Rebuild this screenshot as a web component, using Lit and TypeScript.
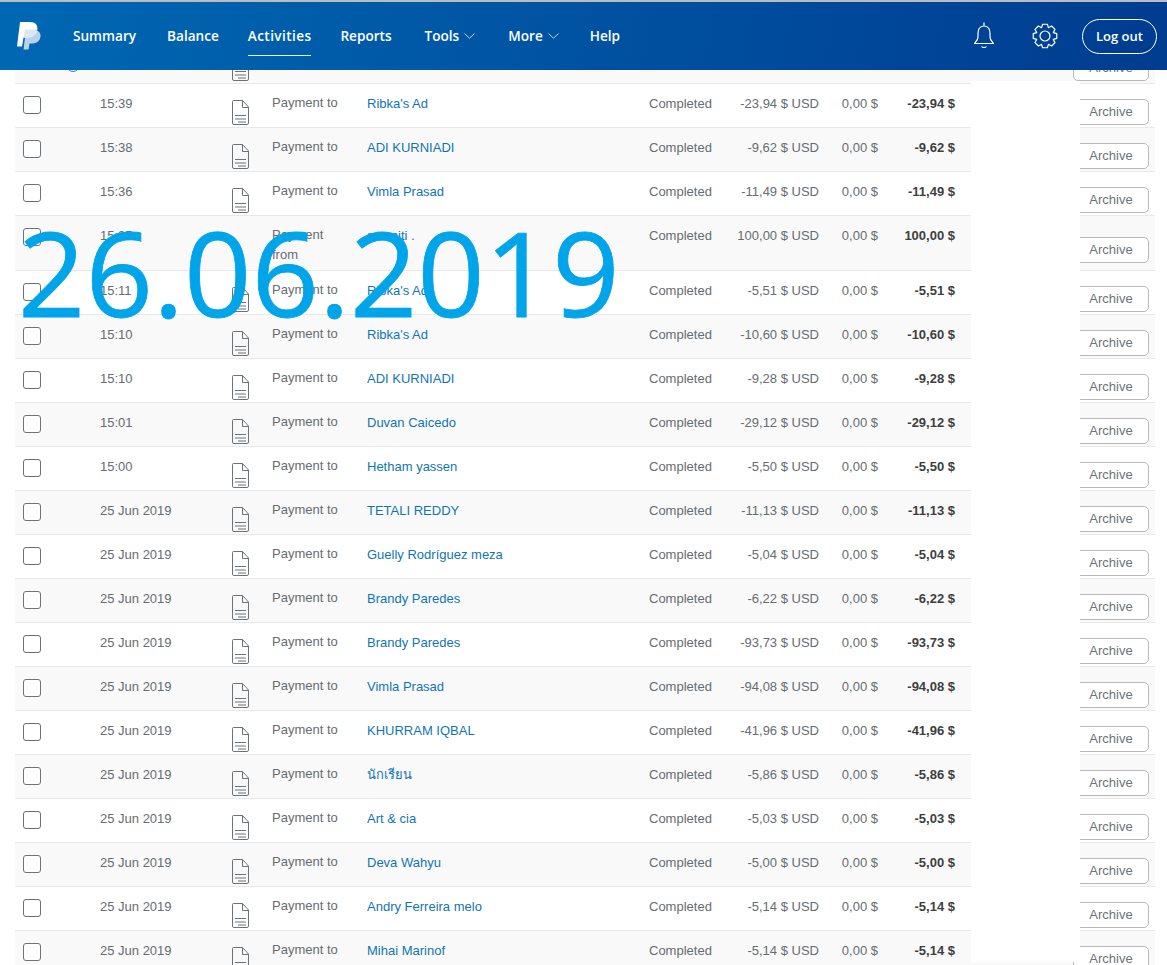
import { LitElement, html, css, svg } from 'lit';
import { customElement } from 'lit/decorators.js';

interface Tx {
  date: string;
  type?: string;
  name: string;
  gross: string;
  net: string;
  noIcon?: boolean;
}

const to = 'Payment to';
const rows: Tx[] = [
  { date: '', type: '', name: '', gross: '', net: '' },
  { date: '15:39', name: "Ribka's Ad", gross: '-23,94', net: '-23,94' },
  { date: '15:38', name: 'ADI KURNIADI', gross: '-9,62', net: '-9,62' },
  { date: '15:36', name: 'Vimla Prasad', gross: '-11,49', net: '-11,49' },
  { date: '15:35', type: 'Payment from', name: 'sasmiti .', gross: '100,00', net: '100,00', noIcon: true },
  { date: '15:11', name: "Ribka's Ad", gross: '-5,51', net: '-5,51' },
  { date: '15:10', name: "Ribka's Ad", gross: '-10,60', net: '-10,60' },
  { date: '15:10', name: 'ADI KURNIADI', gross: '-9,28', net: '-9,28' },
  { date: '15:01', name: 'Duvan Caicedo', gross: '-29,12', net: '-29,12' },
  { date: '15:00', name: 'Hetham yassen', gross: '-5,50', net: '-5,50' },
  { date: '25 Jun 2019', name: 'TETALI REDDY', gross: '-11,13', net: '-11,13' },
  { date: '25 Jun 2019', name: 'Guelly Rodríguez meza', gross: '-5,04', net: '-5,04' },
  { date: '25 Jun 2019', name: 'Brandy Paredes', gross: '-6,22', net: '-6,22' },
  { date: '25 Jun 2019', name: 'Brandy Paredes', gross: '-93,73', net: '-93,73' },
  { date: '25 Jun 2019', name: 'Vimla Prasad', gross: '-94,08', net: '-94,08' },
  { date: '25 Jun 2019', name: 'KHURRAM IQBAL', gross: '-41,96', net: '-41,96' },
  { date: '25 Jun 2019', name: 'นักเรียน', gross: '-5,86', net: '-5,86' },
  { date: '25 Jun 2019', name: 'Art & cia', gross: '-5,03', net: '-5,03' },
  { date: '25 Jun 2019', name: 'Deva Wahyu', gross: '-5,00', net: '-5,00' },
  { date: '25 Jun 2019', name: 'Andry Ferreira melo', gross: '-5,14', net: '-5,14' },
  { date: '25 Jun 2019', name: 'Mihai Marinof', gross: '-5,14', net: '-5,14' },
];

const navItems = [
  { label: 'Summary' },
  { label: 'Balance' },
  { label: 'Activities', active: true },
  { label: 'Reports' },
  { label: 'Tools', menu: true },
  { label: 'More', menu: true },
  { label: 'Help' },
];

// gear outline, 8 teeth
function gearPath(cx: number, cy: number, outer: number, inner: number) {
  const pts: string[] = [];
  for (let i = 0; i < 8; i++) {
    const a = (i * Math.PI) / 4;
    const steps = [
      [-0.39, inner],
      [-0.2, outer],
      [0.2, outer],
      [0.39, inner],
    ];
    for (const [da, r] of steps) {
      pts.push(`${(cx + Math.sin(a + da) * r).toFixed(2)} ${(cy - Math.cos(a + da) * r).toFixed(2)}`);
    }
  }
  return `M${pts.join('L')}Z`;
}

const docIcon = svg`<svg class="doc" width="17" height="25" viewBox="0 0 17 25" fill="none" stroke="#6c7378">
  <path d="M1.500 .5H10.500L16.500 7V23a1.500 1.500 0 0 1-1.500 1.500H2A1.500 1.500 0 0 1 .5 23V1.500A1 1 0 0 1 1.500 .5Z" stroke-linejoin="round"/>
  <path d="M10.500 .5V7.500H16.500"/>
  <path d="M3 15.500H14M3 19H14M6 22H14"/>
</svg>`;

const chevron = svg`<svg class="chev" width="11" height="6" viewBox="0 0 11 6" fill="none" stroke="#cfe0f2" stroke-width=".9"><path d="M.5 .5 5.5 5.2 10.5 .5"/></svg>`;

@customElement('app-root')
export class AppRoot extends LitElement {
  static styles = css`
    :host {
      display: block;
      position: relative;
      width: 1167px;
      height: 965px;
      overflow: hidden;
      background: #fff;
      font-family: "Liberation Sans", Arial, sans-serif;
      font-size: 13px;
      color: #666c70;
    }
    .topbar {
      position: relative;
      z-index: 3;
      box-sizing: border-box;
      height: 70px;
      border-top: 2px solid #b9bcc0;
      background: linear-gradient(100deg, #0068b3 0%, #003c90 100%);
      display: flex;
      align-items: center;
      color: #fff;
    }
    .logo {
      margin-left: 16px;
      margin-top: -1px;
      flex: none;
    }
    nav {
      display: flex;
      gap: 31px;
      margin-left: 32px;
      margin-top: -2px;
      font-family: "Open Sans", sans-serif;
      font-size: 13.6px;
      font-weight: 600;
    }
    .nav-item {
      position: relative;
      display: flex;
      align-items: center;
      gap: 5px;
      height: 34px;
      white-space: nowrap;
    }
    .nav-item.active {
      margin-left: -2px;
      margin-right: -2px;
      letter-spacing: .4px;
    }
    .nav-item.active::after {
      content: "";
      position: absolute;
      left: 0;
      right: 0;
      bottom: -4px;
      border-bottom: 1px solid #e8f0f8;
    }
    .nav-item:nth-child(4) {
      margin-right: 2px;
    }
    .nav-item:last-child {
      margin-left: -2px;
    }
    .chev {
      margin-top: 2px;
      margin-right: 2px;
    }
    .actions {
      margin-left: auto;
      margin-right: 10px;
      display: flex;
      align-items: center;
    }
    .bell {
      margin-right: 37px;
      margin-top: -2px;
    }
    .gear {
      margin-right: 24px;
      margin-top: -1px;
    }
    .logout {
      box-sizing: border-box;
      width: 75px;
      height: 35px;
      border: 1px solid #fff;
      border-radius: 18px;
      background: none;
      color: #fff;
      font-family: "Open Sans", sans-serif;
      font-size: 13px;
      font-weight: 600;
      padding: 0;
    }

    .list {
      margin: -30px 12px 0 15px;
    }
    .row {
      display: grid;
      grid-template-columns: 85px 132px 40px 95px 282px 70px 100px 59px 77px 118px 76px 6px;
      box-sizing: border-box;
      min-height: 44px;
      border-bottom: 1px solid #e9e9e9;
      line-height: 20px;
    }
    .row:nth-child(odd) {
      background: #f9f9f9;
    }
    .cell {
      padding-top: 10px;
      padding-bottom: 4px;
    }
    .select {
      display: flex;
      gap: 25px;
      padding-left: 8px;
    }
    .checkbox {
      box-sizing: border-box;
      width: 18px;
      height: 18px;
      margin-top: 12px;
      border: 1px solid #6c7378;
      border-radius: 3px;
      background: #fff;
    }
    .clock {
      box-sizing: border-box;
      width: 14px;
      height: 14px;
      margin-top: 18px;
      border: 1px solid #2a8fc8;
      border-radius: 50%;
    }
    .doc {
      display: block;
      margin-top: 16px;
    }
    .cell.type {
      padding-top: 9px;
      padding-bottom: 5px;
      padding-right: 20px;
    }
    .name {
      color: #0f76b1;
    }
    .num {
      text-align: right;
    }
    .net {
      font-weight: 700;
      color: #3c3f41;
    }
    .archive {
      box-sizing: border-box;
      align-self: center;
      height: 26px;
      margin-top: 13px;
      border: 1px solid #b9b9b9;
      border-radius: 5px;
      background: #fff;
      color: #6c7378;
      font: inherit;
      padding: 0;
    }

    /* white box pasted over the table, like the date stamp */
    .patch {
      position: absolute;
      left: 971px;
      top: 81px;
      width: 109px;
      height: 881px;
      background: #fff;
    }
    .stamp {
      position: absolute;
      left: 18px;
      top: 193px;
      font-family: "Open Sans", sans-serif;
      font-size: 118px;
      line-height: 158px;
      color: #00a4e8;
      -webkit-text-stroke: .8px #00a4e8;
      white-space: nowrap;
    }
  `;

  renderRow(r: Tx, i: number) {
    // the first row is scrolled almost completely under the top bar
    const partial = i === 0;
    return html`<div class="row">
      <div class="select">
        <div class="checkbox"></div>
        ${partial ? html`<div class="clock"></div>` : null}
      </div>
      <div class="cell">${r.date}</div>
      <div>${r.noIcon ? null : docIcon}</div>
      <div class="cell type">${partial ? '' : r.type ?? to}</div>
      <div class="cell name">${r.name}</div>
      <div class="cell">${partial ? '' : 'Completed'}</div>
      <div class="cell num">${partial ? '' : `${r.gross} $ USD`}</div>
      <div class="cell num">${partial ? '' : '0,00 $'}</div>
      <div class="cell num net">${partial ? '' : `${r.net} $`}</div>
      <div></div>
      <button class="archive">Archive</button>
    </div>`;
  }

  render() {
    return html`
      <header class="topbar">
        <svg class="logo" width="25" height="28" viewBox="0 0 25 28">
          <path fill="#b9d3ea" d="M10 8H17.500C22 8 25 10.500 24.500 14.500C24 19 20.500 21.500 16 21.500H13.500L12.500 27.500H7.500Z"/>
          <path fill="#fff" d="M4 0H14C19.500 0 22 3 21.300 7.500C20.500 12.500 16.500 15.500 11.500 15.500H7.500L6 24.500H1Z"/>
          <path fill="#dbe7f3" d="M7.500 15.500 9 7.500H21.300C20.500 12.500 16.500 15.500 11.500 15.500Z"/>
        </svg>
        <nav>
          ${navItems.map(
            (n) => html`<div class="nav-item ${n.active ? 'active' : ''}">
              ${n.label}${n.menu ? chevron : null}
            </div>`,
          )}
        </nav>
        <div class="actions">
          <svg class="bell" width="22" height="27" viewBox="0 0 22 27" fill="none" stroke="#fff" stroke-width="1.2">
            <path d="M11 .5V4M11 4C6.500 4 5 7.500 5 11.500V15C5 18 3 19.500 1.500 21.500H20.500C19 19.500 17 18 17 15V11.500C17 7.500 15.500 4 11 4Z" stroke-linejoin="round"/>
            <path d="M8.500 24.500C9.500 25.800 12.500 25.800 13.500 24.500"/>
          </svg>
          <svg class="gear" width="26" height="26" viewBox="0 0 26 26" fill="none" stroke="#fff" stroke-width="1.2">
            <path d=${gearPath(13, 13, 12, 9)} stroke-linejoin="round"/>
            <circle cx="13" cy="13" r="5"/>
          </svg>
          <button class="logout">Log out</button>
        </div>
      </header>
      <div class="list">${rows.map((r, i) => this.renderRow(r, i))}</div>
      <div class="patch"></div>
      <div class="stamp">26.06.2019</div>
    `;
  }
}
